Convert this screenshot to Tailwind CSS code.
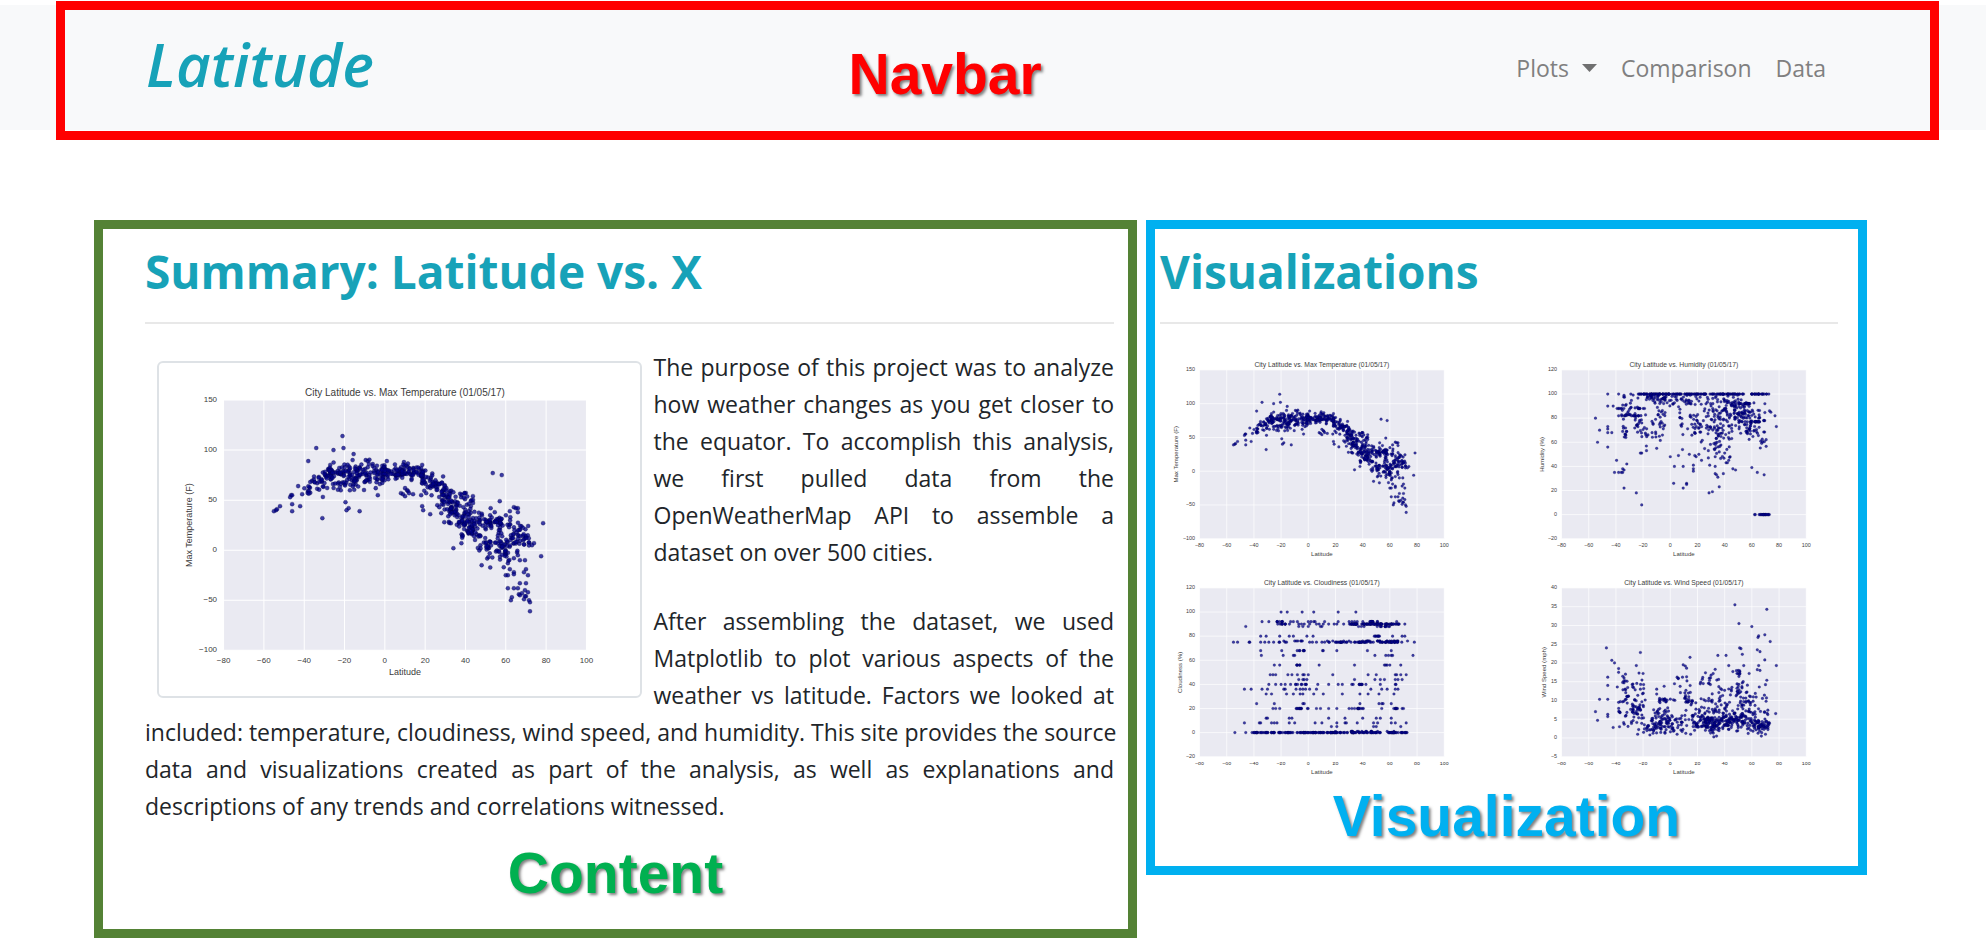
<!DOCTYPE html>
<html lang="en">
<head>
<meta charset="utf-8">
<title>Latitude</title>
<script src="https://cdn.jsdelivr.net/npm/@tailwindcss/browser@4"></script>
</head>
<body class="bg-white font-['Open_Sans','Noto_Sans',sans-serif] text-[#212529]">

<header class="relative pt-[5px]">
  <div class="flex min-h-[125px] items-center justify-between bg-[#f8f9fa] pl-[146px] pr-[160px]">
    <a href="#" class="pb-2 text-[60px] leading-[72px] font-semibold italic text-[#17a2b8]">Latitude</a>
    <strong class="pt-3 font-['Liberation_Sans',sans-serif] text-[57px] leading-[56px] font-bold text-[#ff0000] [text-shadow:2px_2px_3px_rgba(0,0,0,0.5)]">Navbar</strong>
    <nav class="flex items-center gap-6 text-[23px] leading-[36px] text-[#808080]">
      <button type="button" class="flex items-center gap-[13px]">Plots
        <svg class="h-[8px] w-[15px]" viewBox="0 0 15 8" aria-hidden="true"><path d="M0 0H15L7.5 8Z" fill="#707070"/></svg>
      </button>
      <a href="#">Comparison</a>
      <a href="#">Data</a>
    </nav>
  </div>
  <div class="pointer-events-none absolute top-[1px] right-[47px] -bottom-[10px] left-[56px] border-[9px] border-[#ff0000]"></div>
</header>

<main class="mt-[90px] mr-[119px] ml-[94px] grid grid-cols-[minmax(0,1043fr)_minmax(0,721fr)] items-start gap-[9px]">
  <section class="border-[9px] border-[#548235] pt-3 pb-7">
    <div class="pr-[14px] pl-[42px]">
      <h1 class="text-[46px] leading-[60px] font-bold text-[#17a2b8]">Summary: Latitude vs. X</h1>
      <hr class="mt-[21px] mb-[25px] border-t-2 border-[#e8e8e8]">
      <div class="text-justify text-[23px] leading-[37px]">
        <div class="float-left m-3 w-1/2 rounded-md border-2 border-[#dee2e6] p-[6px] pb-[15px]">
          <svg data-chart="temp" class="block w-full" viewBox="0 0 468 312"></svg>
        </div>
        <p class="mb-8">The purpose of this project was to analyze how weather changes as you get closer to the equator. To accomplish this analysis, we first pulled data from the OpenWeatherMap API to assemble a dataset on over 500 cities.</p>
        <p>After assembling the dataset, we used Matplotlib to plot various aspects of the weather vs latitude. Factors we looked at <span class="xl:whitespace-nowrap">included: temperature, cloudiness, wind speed, and humidity. This site provides the source</span> data and visualizations created as part of the analysis, as well as explanations and descriptions of any trends and correlations witnessed.</p>
      </div>
    </div>
    <strong class="mt-5 block text-center font-['Liberation_Sans',sans-serif] text-[57px] leading-[56px] font-bold text-[#00b050] [text-shadow:2px_2px_3px_rgba(0,0,0,0.5)]">Content</strong>
  </section>

  <section class="border-[9px] border-[#00b0f0] pt-3 pb-[22px]">
    <div class="pr-[20px] pl-[5px]">
      <h2 class="text-[46px] leading-[60px] font-bold text-[#17a2b8]">Visualizations</h2>
      <hr class="mt-[21px] mb-[25px] border-t-2 border-[#e8e8e8]">
      <div class="grid grid-cols-2 gap-x-[46px] gap-y-[7px]">
        <a href="#"><svg data-chart="temp" class="block w-full" viewBox="0 0 468 312"></svg></a>
        <a href="#"><svg data-chart="humidity" class="block w-full" viewBox="0 0 468 312"></svg></a>
        <a href="#"><svg data-chart="cloud" class="block w-full" viewBox="0 0 468 312"></svg></a>
        <a href="#"><svg data-chart="wind" class="block w-full" viewBox="0 0 468 312"></svg></a>
      </div>
    </div>
    <strong class="mt-[11px] block text-center font-['Liberation_Sans',sans-serif] text-[57px] leading-[56px] font-bold text-[#00b0f0] [text-shadow:2px_2px_3px_rgba(0,0,0,0.5)]">Visualization</strong>
  </section>
</main>

<script>
// Seeded generator, so that every load draws the same sample.
function rng(seed) {
  return function () {
    seed = (seed + 0x6D2B79F5) | 0;
    var t = Math.imul(seed ^ (seed >>> 15), 1 | seed);
    t = (t + Math.imul(t ^ (t >>> 7), 61 | t)) ^ t;
    return ((t ^ (t >>> 14)) >>> 0) / 4294967296;
  };
}
function gauss(r) { return (r() + r() + r() + r() - 2) * 1.7; }

// Bands are [lat from, lat to, mean from, mean to, spread, count].
function bands(list, r, cap) {
  var out = [];
  list.forEach(function (b) {
    for (var i = 0; i < b[5]; i++) {
      var t = r();
      var y = b[2] + (b[3] - b[2]) * t + gauss(r) * b[4];
      out.push([b[0] + (b[1] - b[0]) * t, Math.min(y, cap)]);
    }
  });
  return out;
}

// Rows are [value, latitudes..., [from, to, count]...].
function rows(list, r) {
  var out = [];
  list.forEach(function (row) {
    row.slice(1).forEach(function (x) {
      if (typeof x === 'number') { out.push([x, row[0]]); return; }
      for (var i = 0; i < x[2]; i++) out.push([x[0] + (x[1] - x[0]) * r(), row[0]]);
    });
  });
  return out;
}

var charts = {
  temp: {
    title: 'City Latitude vs. Max Temperature (01/05/17)', label: 'Max Temperature (F)', labelX: 27,
    min: -100, max: 150, step: 50,
    points: [[-55,39],[-54,40],[-53.5,41],[-52,44],[-46.5,55],[-46,55],[-47,53],[-46,46],[-46,39],[-43,64],[-42,44],[-41,56],[-38,89],[-34,102],[-25.5,100],[-21,114],[-20.5,102],[-15.5,96],[-16,90],[-31,32],[-19.5,48],[-18,42],[-19,40],[-12.5,39],[-3.5,55],[-4.5,62],[-2.5,66],[-9.5,90],[-8.5,89],[-6,86],[1,89],[9.5,88],[8,57],[9,56],[10,54],[10,62],[11,60],[11.5,59],[12,57],[14,56],[18,55],[20.5,57],[18.5,44],[19,40],[22.5,36],[26,45],[27,43],[28,37],[29.5,28],[53.5,77],[58,75],[57,49],[43,50],[52.5,42],[54.5,38],[62,39],[64,43],[65,42],[66,42],[66,38],[78.5,27],[77.5,-6],[74,7],[73,5],[34,2],[38,7],[48,-15],[72,-61],[72,-52],[71.5,-50],[62.5,-50],[63,-47],[61,-38],[64,-38],[66,-38],[69.5,-40],[66.5,-44],[68,-43],[69,-49],[67,-45],[70,-46],[71,-42],[69.5,-46],[60,-25],[61,-25],[64,-22],[64,-24],[62,-19],[59,-17],[70,-19],[69,-22],[71,-25],[70,-33],[67,-33],[66,-5],[67,-10],[69.5,-10],[61,-13],[64,-8]]
      .concat(bands([
        [-40,-33,60,66,4,14],[-36,-25,66,74,6,34],[-28,-17,77,79,4,42],[-30,-8,65,68,4,38],
        [-17,0,77,77,5,66],[-2,10,77,78,4,48],[8,20,79,78,4,48],[18,30,74,60,6,54],
        [28,36,57,42,8,46],[32,44,45,35,8,46],[30,40,38,32,6,14],[36,42,60,54,3,7],
        [38,46,19,25,5,34],[44,58,32,27,5,54],[43,52,11,5,6,14],[50,62,3,0,7,40],[54,61,-10,2,4,10],
        [55,66,18,10,7,22],[60,72,24,16,7,24],[66,71,20,16,6,12],[63,72,5,5,5,7]
      ], rng(7), 150))
  },
  humidity: {
    title: 'City Latitude vs. Humidity (01/05/17)', label: 'Humidity (%)', labelX: 33,
    min: -20, max: 120, step: 20,
    points: [[-55,80],[-52,70],[-53.5,60],[-46,100],[-46,90],[-42,90],[-38,100],[-34,99],[-29,100],[-38,88],[-38,82],[-46,73],[-46,71],[-46,68],[-43,68],[-46,56],[-39.5,45],[-32,42],[-41,35],[-38,35],[-36,35],[-35,38],[-34,37],[-35,35],[-34,22],[-25,18],[-21,8],[-21,51],[-22,51],[-17.5,53],[-10,55],[0,48],[6,49],[9,54],[3,40],[9.5,40],[2.5,26],[9.5,22],[12,26],[12,25],[14,50],[18,49],[19,48],[21,50],[23,45],[17,41],[17,38],[17,36],[28,47],[29,41],[33,40],[33,34],[34,33],[35,31],[39,34],[31,19],[28.5,18],[36,23],[46,38],[48,37],[60,39],[64,35],[69,33],[77,82],[78,73],[73,86],[74,85],[42,43],[43,45],[41,43],[44,48],[28,53],[33,48],[36,52],[40,51]]
      .concat(rows([[100,[-24,24,75],[24,56,45],[59,73,22]],[0,62,62.5,[65,73,18]],[92,[48,60,18]],[77,[58,66,16]],[88,[-40,-33,5],[-28,-18,6]],[82,[-36,-20,10]]], rng(21)))
      .concat(bands([
        [-36,-30,90,85,8,12],[-36,-32,78,70,6,14],[-32,-18,88,84,7,22],[-27,-16,76,68,6,18],
        [-18,0,97,96,3,48],[-12,-3,84,80,7,20],[-15,-5,70,66,5,10],[0,24,97,95,3,34],[4,24,80,78,8,24],
        [15,26,74,64,7,18],[24,40,92,90,6,30],[26,40,78,72,9,42],[38,56,95,88,5,38],[40,54,86,84,6,36],
        [50,60,78,72,5,32],[28,48,66,62,7,30],[55,70,86,82,6,34],[57,71,66,61,5,20],[30,40,60,52,6,8]
      ], rng(5), 100))
  },
  cloud: {
    title: 'City Latitude vs. Cloudiness (01/05/17)', label: 'Cloudiness (%)', labelX: 32,
    min: -20, max: 120, step: 20,
    points: rows([
      [100,-20,-15.5,-4.5,4,22,35],
      [92,-34,-29,-23,-19,-13,-11,-8,0,2,4,5,12,22,30,32,34,36,[39,53,12],65,[-24,-17,5]],
      [90,[-24,-12,9],-7,-5,-3,1,6,8,11,15,19,21,26,[30,67,85],71],
      [88,-46,-7,-4,0,9,10,37,39,41,[50,60,10]],
      [80,-35,-31,-21,-14,-11,-1,3.5,[48,54,7],62,69,71],
      [76,[-10,-4,6],-18,14,18,26,30,[40,46,6],[50,66,14],73],
      [75,-55,-52,-43.5,-43,-35,-32,-29,-25.5,-21.5,-21,-17,-16,1,3,6,10,12,[14,38,18],[34,70,44],78],
      [68,-35,-19.5,[-9,-3,7],10.5,11,21,43.5,61],
      [64,-34.5,-18.5,-11,-10,49,57,59,61,62,77],
      [56,-25,-21,[-9,-3,5],8,34,56,57,58,60,68],
      [48,-28,-26,-24,-15,-12,-8,-4,-3,0,18,44,50,64,65,68,72],
      [44,-7,-4,-3,-1,34,49,53,56,64,66,69],
      [40,-29,-24,-20,-17,-13,[-10,-1,8],7,15,22,25,32,33,[37,43,8],53,64,64.5],
      [36,-47,-42,-34,-30,-18,-17,-9,-6,-4,-2,1,6,46,54,58,64,66],
      [32,-31,-27,-16,-11,-6,-4,4,11,25,38,44,52,63],
      [24,-38,-25,-4,-3,38,52,54,55,61],
      [20,-26,-24,-21,[-12,0,12],6,9,15,21,30,32,34,[36,42,9],54,[61,66,7],69,70],
      [12,-31,-30,-14,-12,15,27,40,50,53,61],
      [8,-47,-36,-35,-27,-25,-23,-14,-10,5,10,21,27,28,36,48,51,61,64,72],
      [5,17,21,48,50,68],
      [1,20,[30,48,12],51,58,63],
      [0,-54,-46,[-42,-4,55],[-4,55,105],[59,73,30]]
    ], rng(11))
  },
  wind: {
    title: 'City Latitude vs. Wind Speed (01/05/17)', label: 'Wind Speed (mph)', labelX: 36,
    min: -5, max: 40, step: 5,
    points: [[47.5,35.5],[71,34.3],[50.5,30.5],[60,29.7],[69.5,27.5],[65,27.2],[64.5,26.8],[73.5,25.7],[51,24],[52,23.8],[53,22.3],[64,23.5],[66,23],[35,22],[41,22],[14.5,21.5],[69.5,20.8],[78,19.3],[77.5,6.5],[-47,24],[-43,20.7],[-41,20],[-22,22.8],[-25,19.3],[-38,18.5],[-38,17.5],[-33,17],[-23,17.3],[-20,17.2],[-46,16.2],[-46,14],[-52,10.3],[-46,10.3],[-55,7],[-53.5,4.7],[-46,6.3],[-46,5.7],[-42,2.8],[-39,13.6],[-35,14.8],[-34,14.7],[-34,16],[-38,9.5],[-4.5,13.8],[-10,13],[-10,11.7],[9.5,19.5],[11,19.2],[12,18.6],[5,16.2],[9,16.2],[12,16.3],[43,19.3],[54,19.3],[65,19.3],[33,18.3],[46,17.7],[50,18],[51,17],[58,17.2],[66,18],[64,18.2],[71,15.4],[70,14.2],[32,0.3],[34,0.5],[67,0.5],[-15,0.8],[-24,1],[5,1],[15,1],[70,1]]
      .concat(bands([
        [-36,-30,13,11,2,16],[-38,-28,7,5,2,18],[-30,-18,13,12,2,16],[-28,-19,8,6.5,1.7,38],[-20,-12,3,2,0.8,14],
        [-14,2,4.5,3.8,1.6,76],[-10,4,10,10,0.3,16],[-10,0,7,6.5,1,10],[2,14,4,4,1.5,24],[3,16,14,12,1.7,18],[10,14,10.5,10,0.6,8],
        [16,28,5,4,1.4,60],[16,28,9,8,1.2,12],[20,30,15,14,1.6,8],[26,44,4,4,1.2,104],[28,44,8,8,1.6,28],[28,46,13,12,2,26],
        [44,58,5,4,1.5,64],[48,60,13,11,2,32],[48,58,9,8,1.4,16],[58,66,5,4,1.5,40],[60,72,11,9,2.2,18],[64,73,3.3,3.3,0.8,38],[48,52,17.6,17.6,0.3,6]
      ], rng(3), 40)
      .map(function (p) { return [p[0], p[1] < 1.2 ? 2.4 - p[1] : p[1]]; }))
  }
};

var L = 58.5, R = 421, T = 31, B = 281;
document.querySelectorAll('svg[data-chart]').forEach(function (svg) {
  var c = charts[svg.dataset.chart];
  function px(v) { return (L + (v + 80) / 180 * (R - L)).toFixed(1); }
  function py(v) { return (B - (v - c.min) / (c.max - c.min) * (B - T)).toFixed(1); }
  function tick(v) { return String(v).replace('-', '\u2212'); }
  var s = '<title>' + c.title + '</title><rect x="' + L + '" y="' + T + '" width="' + (R - L) + '" height="' + (B - T) + '" fill="#eaeaf2"/>';
  var grid = '', text = '', dots = '';
  for (var x = -80; x <= 100; x += 20) {
    grid += 'M' + px(x) + ' ' + T + 'V' + B;
    text += '<text x="' + px(x) + '" y="294" text-anchor="middle" font-size="8">' + tick(x) + '</text>';
  }
  for (var y = c.min; y <= c.max; y += c.step) {
    grid += 'M' + L + ' ' + py(y) + 'H' + R;
    text += '<text x="52" y="' + (+py(y) + 2) + '" text-anchor="end" font-size="8">' + tick(y) + '</text>';
  }
  c.points.forEach(function (p) { dots += '<circle cx="' + px(p[0]) + '" cy="' + py(p[1]) + '" r="2"/>'; });
  var mid = (L + R) / 2;
  text += '<text x="' + mid + '" y="27" text-anchor="middle" font-size="10">' + c.title + '</text>';
  text += '<text x="' + mid + '" y="306" text-anchor="middle" font-size="9">Latitude</text>';
  text += '<text transform="translate(' + c.labelX + ' 156) rotate(-90)" text-anchor="middle" font-size="9">' + c.label + '</text>';
  s += '<path d="' + grid + '" stroke="#fff" stroke-width="1" fill="none"/>';
  s += '<g fill="#00008b" fill-opacity="0.75" stroke="#000040" stroke-opacity="0.5" stroke-width="0.6">' + dots + '</g>';
  s += '<g fill="#3c3c3c" font-family="Liberation Sans, Arial, sans-serif">' + text + '</g>';
  svg.innerHTML = s;
});
</script>
</body>
</html>
